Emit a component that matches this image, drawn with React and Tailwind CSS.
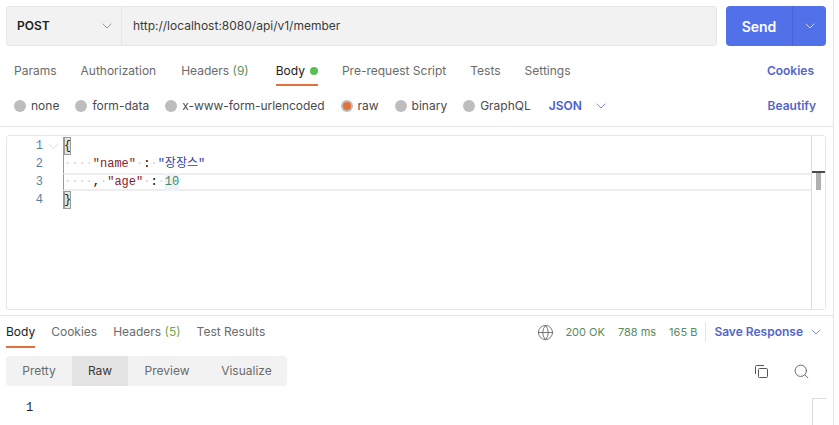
import { ChevronDown, Globe, Search } from 'lucide-react';

const requestTabs = ['Params', 'Authorization', 'Headers', 'Body', 'Pre-request Script', 'Tests', 'Settings'];
const bodyTypes = ['none', 'form-data', 'x-www-form-urlencoded', 'raw', 'binary', 'GraphQL'];

function Radio({ label, active }) {
    return (
        <div className="flex items-center gap-[5px]">
            <span className="flex h-3 w-3 items-center justify-center rounded-full bg-[#bdbdbd]">
                {active && <span className="h-2 w-2 rounded-full bg-[#e0703c]" />}
            </span>
            <span className={`text-[#4a4a4a] ${label === 'x-www-form-urlencoded' ? 'tracking-[-0.05px]' : ''}`}>{label}</span>
        </div>
    );
}

function Dots({ n }) {
    return <span className="text-[#d4d4d4]">{'·'.repeat(n)}</span>;
}

function Bracket({ children }) {
    return (
        <span className="flex h-[18px] w-[7px] items-center justify-center overflow-hidden border border-[#9a9a9a] bg-[#e4e8dc] text-[#222]">
            {children}
        </span>
    );
}

function EditorLine({ num, active, fold, children }) {
    return (
        <div className="flex h-[18px] items-center">
            <span className="w-[36px] shrink-0 text-right text-[#5c7f99]">{num}</span>
            <span className="flex w-[20px] shrink-0 justify-center">
                {fold && <ChevronDown size={17} strokeWidth={0.8} className="text-[#c4c4c4]" />}
            </span>
            <span className={`flex h-full flex-1 items-center whitespace-pre border-l border-[#9a9a9a] ${active ? 'border-y-2 border-y-[#eeeeee]' : ''}`}>
                {children}
            </span>
        </div>
    );
}

export default function App() {
    return (
        <div className="h-[425px] w-[834px] overflow-hidden border-r border-[#e6e6e6] bg-white font-['Inter',sans-serif] text-[12px]">
            {/* Url bar */}
            <div className="flex gap-[9px] pl-[6px] pr-[7px] pt-[6px]">
                <div className="flex h-10 flex-1 items-center rounded-[3px] border border-[#e6e6e6] bg-[#f2f2f2]">
                    <div className="flex h-full w-[115px] items-center justify-between border-r border-[#e6e6e6] pl-[10px] pr-[6px]">
                        <span className="font-semibold text-[#212121]">POST</span>
                        <ChevronDown size={16} className="text-[#6b6b6b]" strokeWidth={1} />
                    </div>
                    <span className="pl-[11px] text-[#3a3a3a]">http://localhost:8080/api/v1/member</span>
                </div>
                <div className="flex h-10 w-[100px] rounded-[4px] bg-[#5271e8] text-white">
                    <div className="flex w-[67px] items-center justify-center border-r border-[#4663d6] text-[14px] font-semibold">Send</div>
                    <div className="flex flex-1 items-center justify-center">
                        <ChevronDown size={16} strokeWidth={1.1} />
                    </div>
                </div>
            </div>

            {/* Request tabs */}
            <div className="mt-[11px] flex h-[29px] items-start justify-between pl-[14px] pr-[17px] text-[#6b6b6b]">
                <div className="flex gap-[24px] pt-[5px]">
                    {requestTabs.map((t) =>
                        t === 'Body' ? (
                            <div key={t} className="-mt-[5px] ml-[3px] flex h-[29px] items-center gap-[5px] border-b-2 border-[#e0703c] text-[#212121]">
                                {t}
                                <span className="h-2 w-2 rounded-full bg-[#5bbf55]" />
                            </div>
                        ) : (
                            <span key={t} className={`whitespace-pre ${t === 'Headers' ? 'ml-px' : ''}`}>
                                {t}
                                {t === 'Headers' && <span className="text-[#5c8f5c]"> (9)</span>}
                            </span>
                        ),
                    )}
                </div>
                <span className="mr-[2px] pt-[5px] font-semibold text-[#5465c9]">Cookies</span>
            </div>

            {/* Body type */}
            <div className="flex h-[41px] items-center justify-between border-b border-[#e6e6e6] pb-px pl-[14px] pr-[17px]">
                <div className="flex items-center gap-[16px]">
                    {bodyTypes.map((t) => (
                        <Radio key={t} label={t} active={t === 'raw'} />
                    ))}
                    <div className="ml-[2px] flex items-center gap-[11px] font-semibold text-[#4b5ed0]">
                        JSON
                        <ChevronDown size={16} strokeWidth={1.1} />
                    </div>
                </div>
                <span className="font-semibold text-[#5465c9]">Beautify</span>
            </div>

            {/* Editor */}
            <div className="relative ml-[6px] mt-2 h-[175px] w-[820px] rounded-[3px] border border-[#e6e6e6] pt-px font-['Liberation_Mono',monospace] text-[12px]">
                <EditorLine num="1" fold>
                    <Bracket>{'{'}</Bracket>
                </EditorLine>
                <EditorLine num="2">
                    <Dots n={4} />
                    <span className="text-[#8b1a2b]">"name"</span>
                    <Dots n={1} />
                    <span>:</span>
                    <Dots n={1} />
                    <span className="font-['Liberation_Mono','Noto_Sans_CJK_KR',monospace] text-[#2f3fa8]">"장장스"</span>
                </EditorLine>
                <EditorLine num="3" active>
                    <Dots n={4} />
                    <span>,</span>
                    <Dots n={1} />
                    <span className="text-[#8b1a2b]">"age"</span>
                    <Dots n={1} />
                    <span>:</span>
                    <Dots n={1} />
                    <span className="bg-[#eef3fa] text-[#3f8a6a]">10</span>
                </EditorLine>
                <EditorLine num="4">
                    <Bracket>{'}'}</Bracket>
                </EditorLine>

                {/* overview ruler */}
                <div className="absolute bottom-0 right-0 top-0 w-[14px] border-l border-[#dcdcdc] bg-white">
                    <div className="absolute left-0 right-0 top-[35px] h-[2px] bg-[#4a4a4a]" />
                    <div className="absolute left-[4px] top-[37px] h-[17px] w-[5px] bg-[#b0b0b0]" />
                </div>
            </div>

            {/* Response header */}
            <div className="mt-[5px] flex h-[33px] items-start justify-between border-t border-[#e6e6e6] pl-[6px] pr-[9px] text-[#6b6b6b]">
                <div className="flex gap-[16px]">
                    <div className="flex h-[32px] items-center border-b-2 border-[#e0703c] pt-[2px] text-[#212121]">Body</div>
                    <span className="flex h-[32px] items-center">Cookies</span>
                    <span className="flex h-[32px] items-center whitespace-pre">
                        Headers<span className="text-[#6fa84f]"> (5)</span>
                    </span>
                    <span className="flex h-[32px] items-center">Test Results</span>
                </div>
                <div className="flex h-[32px] items-center text-[11px] text-[#5c8a5c]">
                    <Globe size={17} strokeWidth={1.1} className="mr-[11px] text-[#555555]" />
                    <span className="mr-[13px]">200 OK</span>
                    <span className="mr-[13px]">788 ms</span>
                    <span className="mr-[8px]">165 B</span>
                    <div className="flex h-5 items-center gap-[5px] border-l border-[#e6e6e6] pl-[8px] text-[12px] font-semibold text-[#5465c9]">
                        Save Response
                        <ChevronDown size={16} strokeWidth={1.1} />
                    </div>
                </div>
            </div>

            {/* Format toolbar */}
            <div className="mt-2 flex items-center justify-between pl-[6px] pr-[23px]">
                <div className="flex h-[30px] overflow-hidden rounded-[4px] bg-[#f2f2f2] text-[#6b6b6b]">
                    <span className="flex w-[66px] items-center justify-center">Pretty</span>
                    <span className="flex w-[56px] items-center justify-center bg-[#e4e4e4] text-[#3a3a3a]">Raw</span>
                    <span className="flex w-[78px] items-center justify-center">Preview</span>
                    <span className="flex w-[81px] items-center justify-center">Visualize</span>
                </div>
                <div className="flex items-center gap-[24px] text-[#555555]">
                    <svg width="15" height="15" viewBox="0 0 15 15" fill="none" stroke="currentColor" strokeWidth="1">
                        <rect x="4.5" y="4.5" width="9" height="9" rx="1" />
                        <path d="M10 1.5H2.5a1 1 0 0 0-1 1V10" />
                    </svg>
                    <Search size={17} strokeWidth={1.2} />
                </div>
            </div>

            {/* Response body */}
            <div className="relative mt-[12px] h-[27px] pt-px font-['Liberation_Mono',monospace] text-[12px] text-[#222]">
                <span className="ml-[26px]">1</span>
                <div className="absolute right-[7px] top-0 h-full w-[14px] border-l border-t border-[#dcdcdc]" />
            </div>
        </div>
    );
}
